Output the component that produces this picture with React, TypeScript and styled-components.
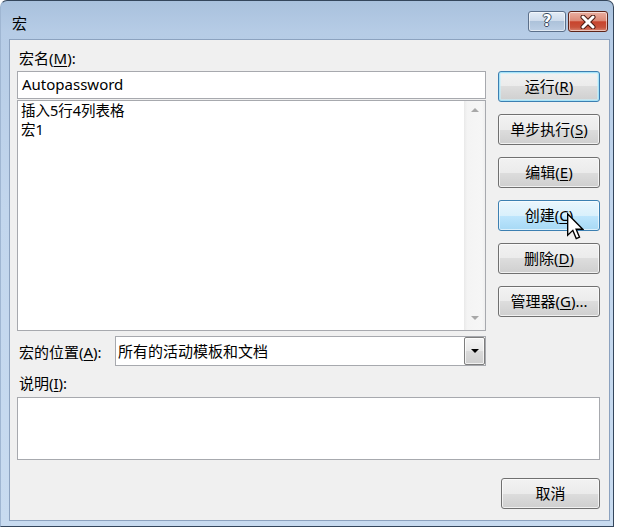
import React from "react";
import styled, { createGlobalStyle, css } from "styled-components";

const Global = createGlobalStyle`
  html, body { margin: 0; padding: 0; background: #ffffff; }
  body {
    font-family: "Noto Sans", "Noto Sans CJK SC", sans-serif;
    overflow: hidden;
    color: #000;
  }
  #root { width: 618px; height: 528px; }
`;

const Window = styled.div`
  position: relative;
  width: 614px;
  height: 527px;
  box-sizing: border-box;
  border: 1px solid #34465c;
  border-left: 1px solid #9fb6d2;
  border-radius: 7px 7px 0 0;
  background: linear-gradient(180deg, #a9c1dd 0%, #b6cce6 6%, #c2d6ed 40%, #c8dbf0 100%);
  display: flex;
  flex-direction: column;
`;

const TitleBar = styled.div`
  height: 38px;
  display: flex;
  align-items: flex-start;
  padding: 0 5px 0 11px;
`;

const TitleText = styled.div`
  padding-top: 12px;
  font-size: 15px;
  line-height: 20px;
  font-family: "Noto Sans CJK SC", sans-serif;
`;

const CaptionGroup = styled.div`
  margin-left: auto;
  margin-top: 10px;
  display: flex;
  gap: 2px;
`;

const CaptionButton = styled.div<{ $kind: "help" | "close" }>`
  height: 21px;
  box-sizing: border-box;
  border-radius: 3px;
  display: flex;
  align-items: center;
  justify-content: center;
  box-shadow: inset 0 0 0 1px rgba(255, 255, 255, 0.55);
  ${(p) =>
    p.$kind === "help"
      ? css`
          width: 38px;
          border: 1px solid #5b6f8a;
          background: linear-gradient(180deg, #e3ecf6 0%, #cfdcec 45%, #adc2da 50%, #bccfe5 100%);
        `
      : css`
          width: 40px;
          border: 1px solid #5e2419;
          background: linear-gradient(180deg, #eab0a2 0%, #dd8a77 45%, #c8442d 52%, #c8523b 80%, #d98571 100%);
        `}
`;

const HelpGlyph = styled.span`
  font-family: "DejaVu Sans", sans-serif;
  font-weight: bold;
  font-size: 15px;
  line-height: 1;
  color: #ffffff;
  text-shadow: 1px 0 0 #3a4a60, -1px 0 0 #3a4a60, 0 1px 0 #3a4a60, 0 -1px 0 #3a4a60;
`;

const Client = styled.div`
  margin: 0 3px 0 8px;
  border: 1px solid #8ca2bf;
  background: #f0f0f0;
  padding: 7px 9px 11px 7px;
  display: flex;
  flex-direction: column;
`;

const TopSection = styled.div`
  display: flex;
  gap: 12px;
`;

const LeftColumn = styled.div`
  width: 470px;
  display: flex;
  flex-direction: column;
`;

const RightColumn = styled.div`
  width: 102px;
  padding-top: 24px;
  display: flex;
  flex-direction: column;
  gap: 12px;
`;

const Label = styled.div<{ $gap?: number }>`
  font-size: 15px;
  line-height: 20px;
  height: 20px;
  padding-left: 2px;
  padding-top: 1px;
  margin-top: ${(p) => p.$gap ?? 0}px;
  white-space: nowrap;
`;

const Key = styled.span`
  text-decoration: underline;
  text-underline-offset: 2px;
  text-decoration-thickness: 1px;
`;

const TextBox = styled.div`
  margin-top: 3px;
  height: 28px;
  box-sizing: border-box;
  border: 1px solid #a7a9ae;
  background: #fff;
  padding: 0 0 3px 4px;
  display: flex;
  align-items: center;
  font-size: 15px;
`;

const ListBox = styled.div`
  margin-top: 1px;
  height: 231px;
  box-sizing: border-box;
  border: 1px solid #a7a9ae;
  background: #fff;
  display: flex;
`;

const ListItems = styled.div`
  flex: 1;
  padding: 0 3px;
  font-size: 14.5px;
  line-height: 19px;
`;

const ListItem = styled.div`
  white-space: nowrap;
`;

const ScrollBar = styled.div`
  width: 21px;
  background: linear-gradient(90deg, #e9e9e9 0%, #f4f4f4 15%, #f6f6f6 85%, #efefef 100%);
  display: flex;
  flex-direction: column;
  justify-content: space-between;
`;

const ScrollArrowBox = styled.div<{ $bottomPad?: number }>`
  height: 18px;
  display: flex;
  align-items: center;
  justify-content: center;
  margin-bottom: ${(p) => p.$bottomPad ?? 0}px;
`;

const Triangle = styled.div<{ $dir: "up" | "down"; $color: string; $w: number }>`
  width: 0;
  height: 0;
  border-left: ${(p) => p.$w}px solid transparent;
  border-right: ${(p) => p.$w}px solid transparent;
  ${(p) =>
    p.$dir === "up"
      ? css`border-bottom: ${p.$w}px solid ${p.$color};`
      : css`border-top: ${p.$w}px solid ${p.$color};`}
`;

const LocationRow = styled.div`
  margin-top: 5px;
  height: 30px;
  display: flex;
  align-items: center;
`;

const LocationLabel = styled(Label)`
  width: 96px;
`;

const Combo = styled.div`
  flex: 1;
  height: 30px;
  box-sizing: border-box;
  border: 1px solid #a7a9ae;
  background: #fff;
  display: flex;
  align-items: stretch;
`;

const ComboText = styled.div`
  flex: 1;
  padding: 0 0 2px 2px;
  display: flex;
  align-items: center;
  font-size: 15px;
  white-space: nowrap;
`;

const DropButton = styled.div`
  width: 21px;
  box-sizing: border-box;
  border: 1px solid #7e7e7e;
  border-radius: 2px;
  background: linear-gradient(180deg, #f4f4f4 0%, #e8e8e8 50%, #dadada 52%, #cfcfcf 100%);
  box-shadow: inset 0 0 0 1px rgba(255, 255, 255, 0.7);
  display: flex;
  align-items: center;
  justify-content: center;
`;

const DescBox = styled.div`
  margin-top: 4px;
  height: 63px;
  box-sizing: border-box;
  border: 1px solid #a7a9ae;
  background: #fff;
`;

const CancelRow = styled.div`
  margin-top: 18px;
  display: flex;
  justify-content: flex-end;
`;

const Button = styled.div<{ $variant?: "default" | "hover"; $width?: number }>`
  width: ${(p) => p.$width ?? 102}px;
  height: 31px;
  box-sizing: border-box;
  border-radius: 3px;
  display: flex;
  align-items: center;
  justify-content: center;
  font-size: 15px;
  padding-bottom: 2px;
  white-space: nowrap;
  border: 1px solid #707070;
  background: linear-gradient(180deg, #f2f2f2 0%, #ebebeb 50%, #dddddd 50%, #cfcfcf 100%);
  box-shadow: inset 0 0 0 1px rgba(252, 252, 252, 0.75);
  ${(p) =>
    p.$variant === "default" &&
    css`
      border-color: #3c7fb1;
      box-shadow: inset 0 0 0 1px #a6e2f7, inset 0 0 0 2px rgba(200, 240, 252, 0.6);
    `}
  ${(p) =>
    p.$variant === "hover" &&
    css`
      border-color: #3c7fb1;
      background: linear-gradient(180deg, #eaf6fd 0%, #d9f0fc 50%, #bee6fd 50%, #a7d9f5 100%);
      box-shadow: inset 0 0 0 1px rgba(255, 255, 255, 0.6);
    `}
`;

const Cursor = styled.svg`
  position: absolute;
  left: 566px;
  top: 212px;
  pointer-events: none;
`;

export default function App() {
  return (
    <>
      <Global />
      <Window>
        <TitleBar>
          <TitleText>宏</TitleText>
          <CaptionGroup>
            <CaptionButton $kind="help">
              <HelpGlyph>?</HelpGlyph>
            </CaptionButton>
            <CaptionButton $kind="close">
              <svg width="16" height="14" viewBox="0 0 16 14">
                <path
                  d="M3 2 L13 12 M13 2 L3 12"
                  stroke="#4a1a12"
                  strokeWidth="5"
                  strokeLinecap="round"
                />
                <path
                  d="M3 2 L13 12 M13 2 L3 12"
                  stroke="#ffffff"
                  strokeWidth="3"
                  strokeLinecap="round"
                />
              </svg>
            </CaptionButton>
          </CaptionGroup>
        </TitleBar>
        <Client>
          <TopSection>
            <LeftColumn>
              <Label>
                宏名(<Key>M</Key>):
              </Label>
              <TextBox>Autopassword</TextBox>
              <ListBox>
                <ListItems>
                  <ListItem>插入5行4列表格</ListItem>
                  <ListItem>宏1</ListItem>
                </ListItems>
                <ScrollBar>
                  <ScrollArrowBox>
                    <Triangle $dir="up" $color="#a8a8a8" $w={4} />
                  </ScrollArrowBox>
                  <ScrollArrowBox $bottomPad={3}>
                    <Triangle $dir="down" $color="#a8a8a8" $w={4} />
                  </ScrollArrowBox>
                </ScrollBar>
              </ListBox>
              <LocationRow>
                <LocationLabel>
                  宏的位置(<Key>A</Key>):
                </LocationLabel>
                <Combo>
                  <ComboText>所有的活动模板和文档</ComboText>
                  <DropButton>
                    <Triangle $dir="down" $color="#000000" $w={4} />
                  </DropButton>
                </Combo>
              </LocationRow>
            </LeftColumn>
            <RightColumn>
              <Button $variant="default">
                运行(<Key>R</Key>)
              </Button>
              <Button>
                单步执行(<Key>S</Key>)
              </Button>
              <Button>
                编辑(<Key>E</Key>)
              </Button>
              <Button $variant="hover">
                创建(<Key>C</Key>)
              </Button>
              <Button>
                删除(<Key>D</Key>)
              </Button>
              <Button>
                管理器(<Key>G</Key>)...
              </Button>
            </RightColumn>
          </TopSection>
          <Label $gap={6}>
            说明(<Key>I</Key>):
          </Label>
          <DescBox />
          <CancelRow>
            <Button $width={99}>取消</Button>
          </CancelRow>
        </Client>
        <Cursor width="17" height="27" viewBox="0 0 12.5 19.5">
          <path
            d="M0.5 0.5 L0.5 16.2 L4.3 12.6 L6.8 18.6 L9.2 17.6 L6.7 11.8 L11.6 11.8 Z"
            fill="#ffffff"
            stroke="#000000"
            strokeWidth="1"
            strokeLinejoin="miter"
          />
        </Cursor>
      </Window>
    </>
  );
}
